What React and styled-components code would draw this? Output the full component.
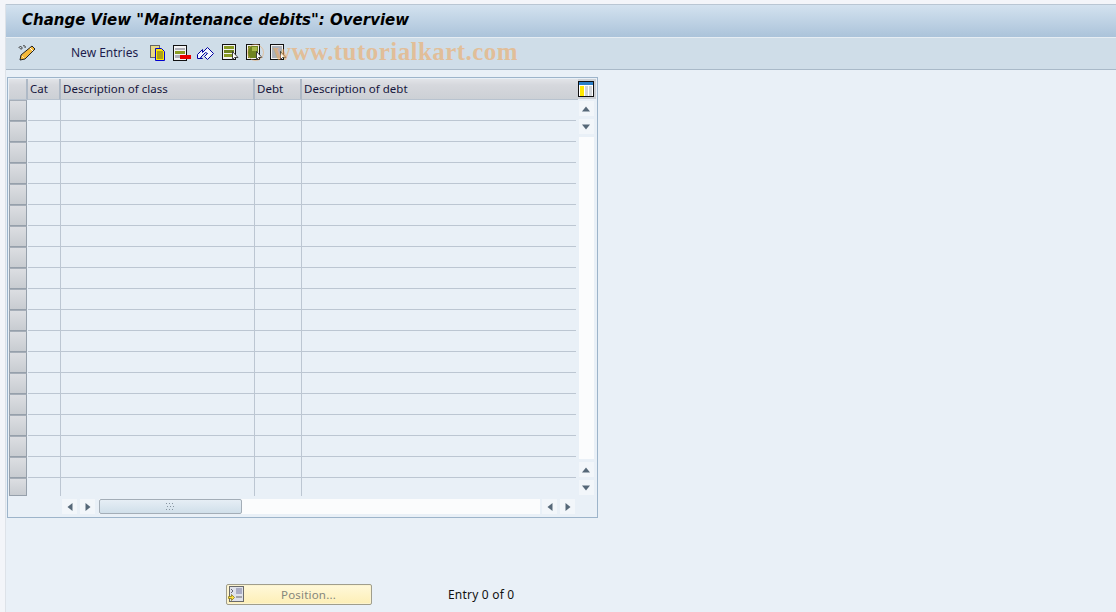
import React from "react"
import styled, { createGlobalStyle } from "styled-components"

const GlobalStyle = createGlobalStyle`
  html, body { margin: 0; padding: 0; height: 100%; overflow: hidden; }
  body { background: #f3f5f9; font-family: "Noto Sans", "DejaVu Sans", sans-serif; }
`

const Page = styled.div`
  width: 1116px;
  height: 612px;
  overflow: hidden;
  display: flex;
  flex-direction: column;
  padding: 4px 0 0 5px;
  box-sizing: border-box;
  background: #f3f5f9;
`

const Main = styled.div`
  flex: 1;
  display: flex;
  flex-direction: column;
  background: #e9f0f7;
  border-left: 1px solid #dde2e8;
`

const TitleBar = styled.div`
  height: 30px;
  border-top: 1px solid #b9c6d3;
  background: linear-gradient(to bottom, #d3e2ef, #abc3da);
  display: flex;
  align-items: center;
  padding: 0 0 2px 16px;
  box-sizing: content-box;
  flex-shrink: 0;
`

const Title = styled.h1`
  margin: 0;
  font: italic bold 15px "DejaVu Sans", "Liberation Sans", sans-serif;
  color: #000;
  white-space: nowrap;
`

const Toolbar = styled.div`
  height: 31px;
  padding-bottom: 2px;
  box-sizing: border-box;
  border-top: 1px solid #e6edf3;
  border-bottom: 1px solid #a9b9c8;
  background: #cfdde8;
  display: flex;
  align-items: center;
  position: relative;
  flex-shrink: 0;
  height: 33px;
`

const ToolSlot = styled.span`
  display: flex;
  align-items: center;
  justify-content: center;
  width: 18px;
  height: 18px;
  margin-left: ${p => p.$gap}px;
`

const ToolText = styled.span`
  margin-left: 35px;
  font: 12px "Noto Sans", sans-serif;
  color: #1c1c4c;
`

const Watermark = styled.span`
  position: absolute;
  left: 267px;
  top: 0;
  font: bold 25px "Liberation Serif", serif;
  letter-spacing: 0.45px;
  color: rgba(238, 170, 100, 0.6);
  white-space: nowrap;
  pointer-events: none;
`

const WatermarkRing = styled.span`
  position: absolute;
  left: 241px;
  top: 6px;
  width: 17px;
  height: 17px;
  box-sizing: border-box;
  border: 1px solid rgba(238, 170, 100, 0.55);
  border-radius: 50%;
  pointer-events: none;
`

const TableBox = styled.div`
  width: 591px;
  height: 441px;
  margin: 7px 0 0 1px;
  box-sizing: border-box;
  border: 1px solid #9db4ca;
  display: grid;
  grid-template-columns: 567px 20px;
  grid-template-rows: 418px 20px;
  padding: 1px 1px 0 1px;
`

const Rows = styled.div`
  display: flex;
  flex-direction: column;
  position: relative;
  z-index: 1;
  min-height: 0;
`

const Row = styled.div`
  display: grid;
  grid-template-columns: 19px 33px 194px 47px 1fr;
  height: ${p => (p.$last ? 18 : 21)}px;
  flex-shrink: 0;
`

const HeadCell = styled.div`
  background: linear-gradient(to bottom, #e2e4e8 0, #d6d8dd 30%, #ccd0d5 100%);
  border-right: 2px solid #aeb9c6;
  border-bottom: 1px solid #b8c3cf;
  box-sizing: border-box;
  padding: 2px 0 0 2px;
  font: 11.5px/16px "Noto Sans", sans-serif;
  color: #16163c;
  white-space: nowrap;
  &:last-child { border-right: 0; margin-right: -2px; }
`

const Selector = styled.div`
  background: linear-gradient(to bottom, #dcdee2, #c8ccd1);
  border: 1px solid #96a0ab;
  border-top-color: #a6aeb8;
  box-sizing: border-box;
  margin-right: 1px;
`

const Cell = styled.div`
  border-right: 1px solid #bcc6d2;
  border-bottom: ${p => (p.$open ? 0 : 1)}px solid #bcc6d2;
  box-sizing: border-box;
  &:last-child { border-right: 0; }
`

const VScroll = styled.div`
  display: flex;
  flex-direction: column;
  align-items: center;
  gap: 3px;
  padding-bottom: 2px;
  box-sizing: border-box;
`

const ColumnsButton = styled.div`
  width: 20px;
  height: 20px;
  display: flex;
  align-items: center;
  justify-content: center;
  background: #ccd0d5;
  margin-bottom: -1px;
  flex-shrink: 0;
`

const ScrollBtn = styled.div`
  width: 15px;
  height: 15px;
  flex-shrink: 0;
  background: #f2f6fa;
  display: flex;
  align-items: center;
  justify-content: center;
`

const VTrack = styled.div`
  flex: 1;
  width: 15px;
  background: #fbfcfd;
`

const HScroll = styled.div`
  display: flex;
  align-items: flex-start;
  gap: 3px;
  padding: 2px 1px 0 53px;
  box-sizing: border-box;
`

const HTrack = styled.div`
  flex: 1;
  height: 15px;
  margin: 0 -1px 0 1px;
  background: #fbfcfd;
  display: flex;
`

const Thumb = styled.div`
  width: 143px;
  height: 15px;
  box-sizing: border-box;
  border: 1px solid #a3adb7;
  border-radius: 2px;
  background: linear-gradient(to bottom, #e6eef5, #d0dfea);
  display: flex;
  align-items: center;
  justify-content: center;
`

const Footer = styled.div`
  display: flex;
  align-items: center;
  margin-top: 66px;
  padding-left: 220px;
`

const PositionButton = styled.div`
  width: 146px;
  height: 21px;
  box-sizing: border-box;
  border: 1px solid #a09e8c;
  border-radius: 2px;
  box-shadow: inset 0 0 0 1px #fbf3cf;
  background: linear-gradient(to bottom, #fff8da, #fdefb6);
  display: flex;
  align-items: center;
  padding-left: 1px;
  font: 11.5px "Noto Sans", sans-serif;
  color: #85867c;
`

const ButtonLabel = styled.span`
  flex: 1;
  text-align: center;
  letter-spacing: 0.2px;
  margin-left: 2px;
`

const EntryText = styled.span`
  margin-left: 76px;
  font: 12px "Noto Sans", sans-serif;
  letter-spacing: 0.2px;
  color: #111;
`

const Arrow = ({ dir }) => {
  const points = { up: "1,7.5 9,7.5 5,2.5", down: "1,2.5 9,2.5 5,7.5", left: "7.5,1 7.5,9 2.5,5", right: "2.5,1 2.5,9 7.5,5" }
  return (
    <svg width="10" height="10" viewBox="0 0 10 10">
      <polygon points={points[dir]} fill="#566878" />
    </svg>
  )
}

const Pencil = () => (
  <svg width="18" height="17" viewBox="0 0 18 17">
    <path d="M1 4c0-2 3-2 3 0s-2 1-2 0M5 2c1-1 3 0 2 2" fill="none" stroke="#333" strokeWidth="1" />
    <path d="M14 2l3 3-10 10-5 1 1-5z" fill="#f5b93a" stroke="#222" strokeWidth="1" />
    <path d="M12 4l3 3" stroke="#fff" strokeWidth="1" />
    <path d="M4 12l2 2" stroke="#fbe6b0" strokeWidth="1" />
  </svg>
)

const Copy = () => (
  <svg width="16" height="16" viewBox="0 0 16 16">
    <rect x="0.5" y="0.5" width="9" height="12" fill="#e8d884" stroke="#666" />
    <path d="M5.5 3.5h6l3 3v9h-9z" fill="#ffe800" stroke="#0000d0" />
    <path d="M7 7h6M7 9h6M7 11h6M7 13h6" stroke="#5a5a30" />
  </svg>
)

const Delete = () => (
  <svg width="18" height="16" viewBox="0 0 18 16">
    <rect x="0.5" y="0.5" width="13" height="15" fill="#f4f4f4" stroke="#111" />
    <rect x="2" y="3" width="10" height="2" fill="#b0b0b8" />
    <rect x="2" y="6" width="10" height="3" fill="#8a9c24" />
    <rect x="2" y="10" width="5" height="3" fill="#b0b0b8" />
    <rect x="7" y="10" width="11" height="4" fill="#e80000" />
  </svg>
)

const Undo = () => (
  <svg width="18" height="16" viewBox="0 0 18 16">
    <path d="M0.5 9.5l5-5v3l5-5 6 6-6 6-3-3 3-3-2-1-5 5 2 1h-5z" fill="#f2f6ff" stroke="#0000a0" strokeWidth="1" />
  </svg>
)

const Sheet = ({ pale, dark }) => (
  <svg width="17" height="17" viewBox="0 0 17 17">
    <rect x="0.5" y="0.5" width="13" height="15" fill="#f2f2f2" stroke="#111" />
    {pale ? (
      <path d="M2 3h10M2 5h10M2 7h10M2 9h10M2 11h10M2 13h10" stroke="#667080" />
    ) : dark ? (
      <g>
        <rect x="2" y="2" width="10" height="12" fill="#6f8420" />
        <rect x="6" y="3" width="5" height="4" fill="#a8b848" />
      </g>
    ) : (
      <g>
        <rect x="2" y="2" width="10" height="3" fill="#8a9c24" />
        <rect x="2" y="6" width="10" height="3" fill="#6f8420" />
        <rect x="2" y="10" width="10" height="3" fill="#8a9c24" />
      </g>
    )}
    <path d="M10.5 7.5v8l2-2h3.5z" fill="#fff" stroke="#222" strokeWidth="0.8" />
  </svg>
)

const Columns = () => (
  <svg width="16" height="16" viewBox="0 0 16 16">
    <rect x="0.5" y="0.5" width="15" height="15" fill="#fff" stroke="#111" />
    <rect x="1" y="1" width="14" height="3" fill="#2a7fc8" />
    <rect x="2" y="5" width="4" height="10" fill="#ffe800" />
    <rect x="7" y="5" width="3" height="10" fill="#d0d4d8" />
    <rect x="11" y="5" width="3" height="10" fill="#d0d4d8" />
  </svg>
)

const Grip = () => (
  <svg width="9" height="7" viewBox="0 0 9 7">
    <path d="M0 .5h1M3 .5h1M6 .5h1M1 3.5h1M4 3.5h1M7 3.5h1M0 6.5h1M3 6.5h1M6 6.5h1" stroke="#8794a0" />
  </svg>
)

const PositionIcon = () => (
  <svg width="16" height="17" viewBox="0 0 16 17">
    <rect x="1.5" y="0.5" width="14" height="15" fill="#dfe2ea" stroke="#6a6a6a" />
    <rect x="8" y="2" width="6" height="6" fill="#a9acc4" />
    <path d="M8 11h6" stroke="#666" />
    <path d="M3 3l2 2-2 2" fill="none" stroke="#667" />
    <path d="M0.5 10.5h3v-2l3 3-3 3v-2h-3z" fill="#ffe23c" stroke="#7a6a10" strokeWidth="0.7" />
  </svg>
)

const headers = ["", "Cat", "Description of class", "Debt", "Description of debt"]
const rows = Array.from({ length: 19 }, (_, i) => i)

export default function App() {
  return (
    <Page>
      <GlobalStyle />
      <Main>
        <TitleBar>
          <Title>Change View "Maintenance debits": Overview</Title>
        </TitleBar>
        <Toolbar>
          <ToolSlot $gap={12}><Pencil /></ToolSlot>
          <ToolText>New Entries</ToolText>
          <ToolSlot $gap={11}><Copy /></ToolSlot>
          <ToolSlot $gap={6}><Delete /></ToolSlot>
          <ToolSlot $gap={6}><Undo /></ToolSlot>
          <ToolSlot $gap={6}><Sheet /></ToolSlot>
          <ToolSlot $gap={6}><Sheet dark /></ToolSlot>
          <ToolSlot $gap={6}><Sheet pale /></ToolSlot>
          <WatermarkRing />
          <Watermark>www.tutorialkart.com</Watermark>
        </Toolbar>
        <TableBox>
          <Rows>
            <Row>
              {headers.map((h, i) => <HeadCell key={i}>{h}</HeadCell>)}
            </Row>
            {rows.map(i => (
              <Row key={i} $last={i === 18}>
                <Selector />
                <Cell $open={i === 18} />
                <Cell $open={i === 18} />
                <Cell $open={i === 18} />
                <Cell $open={i === 18} />
              </Row>
            ))}
          </Rows>
          <VScroll>
            <ColumnsButton><Columns /></ColumnsButton>
            <ScrollBtn><Arrow dir="up" /></ScrollBtn>
            <ScrollBtn><Arrow dir="down" /></ScrollBtn>
            <VTrack />
            <ScrollBtn><Arrow dir="up" /></ScrollBtn>
            <ScrollBtn><Arrow dir="down" /></ScrollBtn>
          </VScroll>
          <HScroll>
            <ScrollBtn><Arrow dir="left" /></ScrollBtn>
            <ScrollBtn><Arrow dir="right" /></ScrollBtn>
            <HTrack><Thumb><Grip /></Thumb></HTrack>
            <ScrollBtn><Arrow dir="left" /></ScrollBtn>
            <ScrollBtn><Arrow dir="right" /></ScrollBtn>
          </HScroll>
        </TableBox>
        <Footer>
          <PositionButton>
            <PositionIcon />
            <ButtonLabel>Position...</ButtonLabel>
          </PositionButton>
          <EntryText>Entry 0 of 0</EntryText>
        </Footer>
      </Main>
    </Page>
  )
}
